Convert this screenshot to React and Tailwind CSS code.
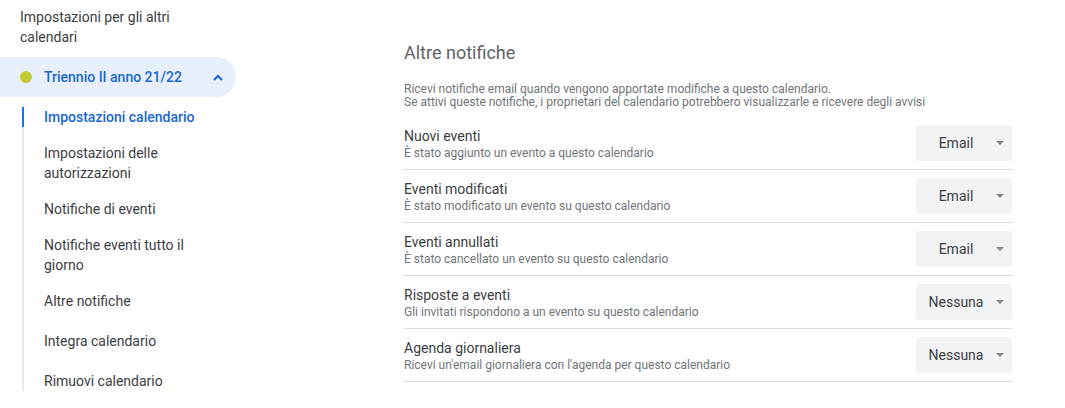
import React from 'react'

const menuItems = [
  { label: 'Impostazioni calendario', active: true, gap: 'mt-0' },
  { label: 'Impostazioni delle autorizzazioni', gap: 'mt-4' },
  { label: 'Notifiche di eventi', gap: 'mt-4' },
  { label: 'Notifiche eventi tutto il giorno', gap: 'mt-4' },
  { label: 'Altre notifiche', gap: 'mt-4' },
  { label: 'Integra calendario', gap: 'mt-5' },
  { label: 'Rimuovi calendario', gap: 'mt-5' },
]

const rows = [
  { title: 'Nuovi eventi', desc: 'È stato aggiunto un evento a questo calendario', value: 'Email' },
  { title: 'Eventi modificati', desc: 'È stato modificato un evento su questo calendario', value: 'Email' },
  { title: 'Eventi annullati', desc: 'È stato cancellato un evento su questo calendario', value: 'Email' },
  { title: 'Risposte a eventi', desc: 'Gli invitati rispondono a un evento su questo calendario', value: 'Nessuna' },
  { title: 'Agenda giornaliera', desc: "Ricevi un'email giornaliera con l'agenda per questo calendario", value: 'Nessuna' },
]

const Select = ({ value }) => (
  <div className="flex items-center w-24 h-9 pl-2 pr-2 bg-[#f1f3f4] rounded shrink-0">
    <span className="w-16 text-center text-sm text-[#3c4043]">{value}</span>
    <svg className="ml-2" width="8" height="4" viewBox="0 0 8 4">
      <path d="M0 0 L8 0 L4 4 Z" fill="#80868b" />
    </svg>
  </div>
)

export default function App() {
  return (
    <div className="flex w-[1065px] h-[408px] overflow-hidden bg-white font-['Roboto',sans-serif]">
      {/* Sidebar */}
      <aside className="w-[256px] shrink-0 pt-[7px]">
        <h2 className="px-5 w-[236px] text-sm leading-5 text-[#3c4043]">
          Impostazioni per gli altri calendari
        </h2>

        <div className="mt-[10px] w-[236px] h-10 flex items-center pl-5 pr-[13px] bg-[#e8f0fe] rounded-r-full">
          <span className="w-3 h-3 rounded-full bg-[#c0ca33]" />
          <span className="ml-3 flex-1 text-sm font-medium text-[#1967d2]">Triennio II anno 21/22</span>
          <svg width="10" height="7" viewBox="0 0 10 7">
            <path d="M1 6 L5 2 L9 6" fill="none" stroke="#1967d2" strokeWidth="2" />
          </svg>
        </div>

        <nav className="mt-[10px] ml-[22px] border-l-2 border-[#e8eaed] flex flex-col">
          {menuItems.map((item) => (
            <div
              key={item.label}
              className={`${item.gap} -ml-[2px] pl-5 pr-[36px] border-l-2 text-sm leading-5 ${
                item.active
                  ? 'border-[#1a73e8] text-[#1967d2] font-medium'
                  : 'border-transparent text-[#3c4043]'
              }`}
            >
              {item.label}
            </div>
          ))}
        </nav>
      </aside>

      {/* Main */}
      <main className="pl-[148px] pt-[41px]">
        <div className="w-[608px]">
          <h1 className="text-lg leading-6 text-[#5f6368]">Altre notifiche</h1>
          <p className="mt-[18px] text-xs leading-[13px] text-[#70757a]">
            Ricevi notifiche email quando vengono apportate modifiche a questo calendario.
            <br />
            Se attivi queste notifiche, i proprietari del calendario potrebbero visualizzarle e ricevere degli avvisi
          </p>

          <div className="mt-[8px]">
            {rows.map((row) => (
              <div key={row.title} className="flex items-center py-2 border-b border-[#dadce0]">
                <div className="flex-1">
                  <div className="text-sm leading-5 text-[#3c4043]">{row.title}</div>
                  <div className="text-xs leading-[14px] text-[#70757a]">{row.desc}</div>
                </div>
                <Select value={row.value} />
              </div>
            ))}
          </div>
        </div>
      </main>
    </div>
  )
}
